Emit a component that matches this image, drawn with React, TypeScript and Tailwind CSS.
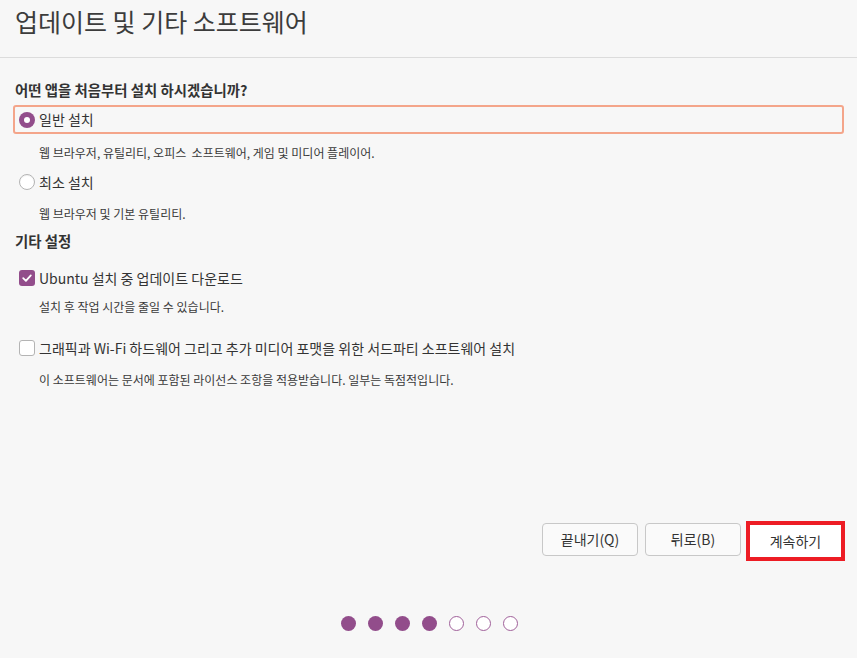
import React from "react";

const font = { fontFamily: '"Noto Sans CJK KR", "Noto Sans", sans-serif' };

function Radio({ checked }: { checked: boolean }) {
  return checked ? (
    <span className="flex h-[16px] w-[16px] items-center justify-center rounded-full bg-[#924d8b]">
      <span className="h-[6px] w-[6px] rounded-full bg-white" />
    </span>
  ) : (
    <span className="h-[16px] w-[16px] rounded-full border border-[#b4b4b4] bg-white shadow-[inset_0_1px_1px_rgba(0,0,0,0.06)]" />
  );
}

function Check({ checked }: { checked: boolean }) {
  return checked ? (
    <span className="flex h-[16px] w-[16px] items-center justify-center rounded-[3px] bg-[#924d8b]">
      <svg width="12" height="12" viewBox="0 0 12 12">
        <path d="M2.2 6.2 L4.9 8.8 L9.8 3.4" fill="none" stroke="white" strokeWidth="1.8" strokeLinecap="round" strokeLinejoin="round" />
      </svg>
    </span>
  ) : (
    <span className="h-[16px] w-[16px] rounded-[3px] border border-[#b4b4b4] bg-white" />
  );
}

export default function App() {
  return (
    <div style={font} className="flex h-[658px] w-[857px] flex-col bg-[#f7f7f7] text-[#333333]">
      <div className="h-[58px] border-b border-[#dcdcdc] px-[15px] pt-[3px]">
        <div className="text-[25px] leading-[36px] text-[#3c3c3c]">업데이트 및 기타 소프트웨어</div>
      </div>

      <div className="flex flex-col px-[13px]">
        <div className="mt-[20px] flex h-[24px] items-center pl-[2px] text-[14.4px] font-bold">
          어떤 앱을 처음부터 설치 하시겠습니까?
        </div>
        <div className="mt-[3px] flex h-[29px] items-center gap-[4px] rounded-[3px] border-2 border-[#f4a58a] pl-[4px] text-[14px]">
          <Radio checked />
          <span>일반 설치</span>
        </div>
        <div className="mt-[7px] flex h-[24px] items-center pl-[26px] text-[12px] text-[#3a3a3a]">
          웹 브라우저, 유틸리티, 오피스&nbsp; 소프트웨어, 게임 및 미디어 플레이어.
        </div>
        <div className="mt-[5px] flex h-[24px] items-center gap-[4px] pl-[6px] text-[14px]">
          <Radio checked={false} />
          <span>최소 설치</span>
        </div>
        <div className="mt-[8px] flex h-[24px] items-center pl-[26px] text-[12px] text-[#3a3a3a]">
          웹 브라우저 및 기본 유틸리티.
        </div>
        <div className="mt-[3px] flex h-[24px] items-center pl-[2px] text-[14.4px] font-bold">
          기타 설정
        </div>
        <div className="mt-[13px] flex h-[24px] items-center gap-[4px] pl-[6px] text-[14px]">
          <Check checked />
          <span>Ubuntu 설치 중 업데이트 다운로드</span>
        </div>
        <div className="mt-[5px] flex h-[24px] items-center pl-[26px] text-[12px] text-[#3a3a3a]">
          설치 후 작업 시간을 줄일 수 있습니다.
        </div>
        <div className="mt-[17px] flex h-[24px] items-center gap-[4px] pl-[6px] text-[14px]">
          <Check checked={false} />
          <span>그래픽과 Wi-Fi 하드웨어 그리고 추가 미디어 포맷을 위한 서드파티 소프트웨어 설치</span>
        </div>
        <div className="mt-[8px] flex h-[24px] items-center pl-[26px] text-[12px] text-[#3a3a3a]">
          이 소프트웨어는 문서에 포함된 라이선스 조항을 적용받습니다. 일부는 독점적입니다.
        </div>
      </div>

      <div className="mt-[129px] flex items-start justify-end pr-[12px]">
        <div className="mt-[2px] flex h-[33px] w-[96px] items-center justify-center rounded-[4px] border border-[#c8c8c8] bg-[#fafafa] text-[14px]">
          끝내기(Q)
        </div>
        <div className="ml-[7px] mt-[2px] flex h-[33px] w-[96px] items-center justify-center rounded-[4px] border border-[#c8c8c8] bg-[#fafafa] text-[14px]">
          뒤로(B)
        </div>
        <div className="ml-[5px] flex h-[40px] w-[99px] items-center justify-center border-4 border-[#ed1c24] bg-white text-[14px]">
          계속하기
        </div>
      </div>

      <div className="mt-[55px] flex justify-center gap-[12px] pl-[1px]">
        {[0, 1, 2, 3].map((i) => (
          <span key={i} className="h-[15px] w-[15px] rounded-full bg-[#924d8b]" />
        ))}
        {[4, 5, 6].map((i) => (
          <span key={i} className="h-[15px] w-[15px] rounded-full border-[1.5px] border-[#a0609a] bg-white" />
        ))}
      </div>
    </div>
  );
}
